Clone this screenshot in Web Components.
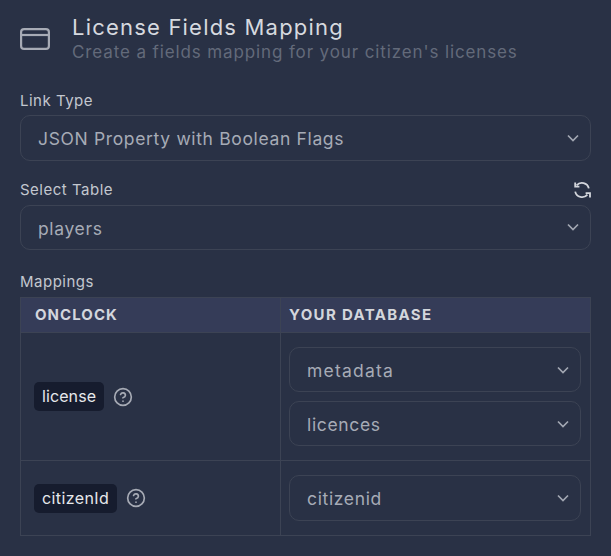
<!DOCTYPE html>
<html><head><meta charset="utf-8"><style>
html,body{margin:0;padding:0;background:#293145;}
body{font-family:Inter,"DejaVu Sans",sans-serif;width:611px;height:556px;overflow:hidden}
</style></head><body>
<mapping-panel>
  <panel-header slot="header" title-text="License Fields Mapping" sub="Create a fields mapping for your citizen's licenses"></panel-header>
  <form-field label="Link Type"><fake-select value="JSON Property with Boolean Flags"></fake-select></form-field>
  <form-field label="Select Table" refresh><fake-select style="--pt:2px" value="players"></fake-select></form-field>
  <form-field label="Mappings" last>
    <mapping-table>
      <mapping-row slot="rows" chip="license" style="--cls:.1px"><fake-select style="--h:45px;--ls:1.2px" value="metadata"></fake-select><fake-select style="--h:45px" value="licences"></fake-select></mapping-row>
      <mapping-row slot="rows" chip="citizenId" last><fake-select style="--h:46px" value="citizenid"></fake-select></mapping-row>
    </mapping-table>
  </form-field>
</mapping-panel>
<script>
const def=(name,html,setup)=>customElements.define(name,class extends HTMLElement{
  constructor(){super();const r=this.attachShadow({mode:'open'});const t=document.createElement('template');t.innerHTML=html;r.appendChild(t.content.cloneNode(true));}
  connectedCallback(){setup&&setup(this,this.shadowRoot);}
});
def('mapping-panel',`<style>:host{display:block;padding:14px 20px 0 20px}
.h{margin-bottom:26px}</style><div class="h"><slot name="header"></slot></div><slot></slot>`);
def('panel-header',`<style>:host{display:flex;align-items:center;gap:22px}
svg{display:block;flex:none;width:30px;height:22px;margin-top:1px}
.t{font-size:22px;line-height:27px;color:#d6d9df;letter-spacing:1.2px}
.s{font-size:17px;line-height:22px;color:#636a7a;letter-spacing:.88px}</style>
<svg viewBox="0 0 30 22" fill="none" stroke="#a7abb5" stroke-width="2.2"><rect x="1.1" y="1.1" width="27.8" height="19.8" rx="3"/><path d="M1 7h28"/></svg>
<div><div class="t"></div><div class="s"></div></div>`,(e,r)=>{r.querySelector('.t').textContent=e.getAttribute('title-text');r.querySelector('.s').textContent=e.getAttribute('sub');});
def('form-field',`<style>:host{display:block;margin-bottom:18px}
:host([last]){margin-bottom:0}
.l{display:flex;justify-content:space-between;align-items:center;height:22px;margin-bottom:4px;font-size:15px;letter-spacing:.5px;color:#c3c7cf}
:host([last]) .l{margin-bottom:5px;padding-top:2px}
svg{display:none;width:18px;height:18px}
:host([refresh]) svg{display:block}</style>
<div class="l"><span></span><svg viewBox="0 0 18 18" fill="none" stroke="#d3d6dc" stroke-width="1.8"><path d="M15.8 7.4A7 7 0 0 0 3.6 4.4"/><path d="M2.2 10.6a7 7 0 0 0 12.2 3"/><path d="M2.2 1.4v4.2h4.2"/><path d="M17 16.6v-4.4h-4.4"/></svg></div><slot></slot>`,(e,r)=>{r.querySelector('span').textContent=e.getAttribute('label');});
def('fake-select',`<style>:host{display:flex;align-items:center;justify-content:space-between;box-sizing:border-box;height:var(--h,45.5px);border:1px solid #3c4354;border-radius:10px;padding:0 11px 0 17px;font-size:17.5px;color:#a6abb6;letter-spacing:var(--ls,.65px)}
span{padding-top:var(--pt,1px)}
svg{width:12px;height:8px;flex:none}</style><span></span><svg viewBox="0 0 12 8" fill="none" stroke="#a2a7b2" stroke-width="1.7"><path d="M1 1.5l5 5 5-5"/></svg>`,(e,r)=>{r.querySelector('span').textContent=e.getAttribute('value');});
def('mapping-table',`<style>:host{display:block;border:1px solid #3c4354;box-sizing:border-box;width:571px}
.hd{display:grid;grid-template-columns:259px 1fr;background:#353c58;height:34px;border-bottom:1px solid #3c4354;font-weight:700;font-size:15px;letter-spacing:1.05px;color:#d3d6dc}
.hd div{display:flex;align-items:center;padding:0 0 1px 14px}
.hd div+div{border-left:1px solid #3c4354;padding-left:8px;letter-spacing:1.34px}</style>
<div class="hd"><div>ONCLOCK</div><div>YOUR DATABASE</div></div><slot name="rows"></slot>`);
def('mapping-row',`<style>:host{display:grid;grid-template-columns:259px 1fr;border-bottom:1px solid #3c4354}
:host([last]){border-bottom:0}
.a{display:flex;align-items:center;gap:9px;padding-left:13px}
.c{background:#161c2e;color:#e6e8ec;border-radius:5px;padding:0 8px;height:29px;line-height:29px;font-size:16px;letter-spacing:var(--cls,.4px)}
svg{width:20px;height:20px;flex:none}
.b{border-left:1px solid #3c4354;padding:14px 9px 14px 8px;display:flex;flex-direction:column;gap:9px}</style>
<div class="a"><span class="c"></span><svg viewBox="0 0 24 24" fill="none" stroke="#a7abb5" stroke-width="2" stroke-linecap="round" stroke-linejoin="round"><circle cx="12" cy="12" r="10"/><path d="M9.1 9a3 3 0 0 1 5.8 1c0 2-3 3-3 3"/><path d="M12 17h.01"/></svg></div><div class="b"><slot></slot></div>`,(e,r)=>{r.querySelector('.c').textContent=e.getAttribute('chip');});
</script></body></html>
